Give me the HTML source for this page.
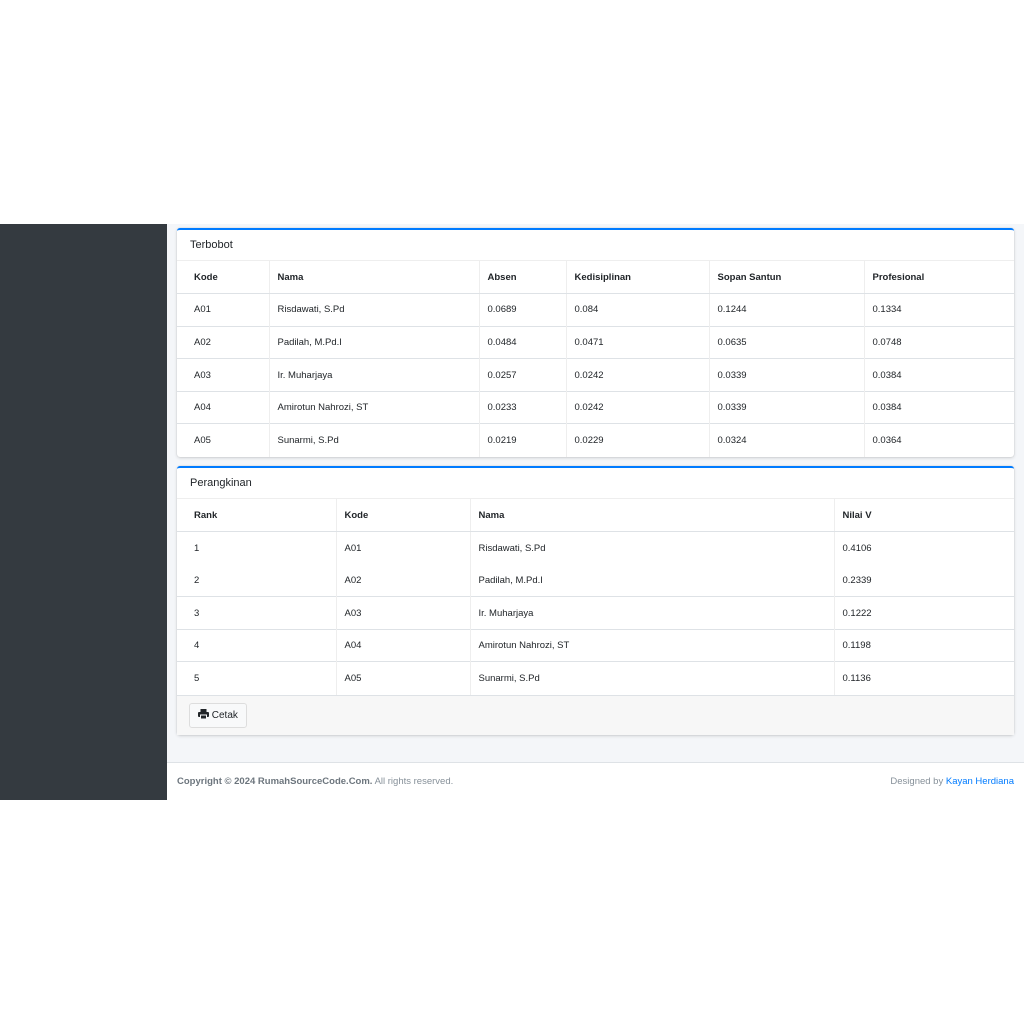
<!DOCTYPE html>
<html><head><style>
*{box-sizing:border-box;margin:0;padding:0}
body{width:1024px;height:1024px;background:#fff;font-family:"Liberation Sans",sans-serif;color:#212529;position:relative;overflow:hidden}
.side{position:absolute;left:0;top:224px;width:167px;height:576px;background:#343a40}
.main{position:absolute;left:167px;top:224px;width:857px;height:538px;background:#f4f6f9}
.foot{position:absolute;left:167px;top:762px;width:857px;height:38px;background:#fff;border-top:1px solid #dee2e6;font-size:9.5px;color:#869099;padding:0 10px;line-height:38px}
.foot b{color:#6c757d}
.foot .r{position:absolute;right:10px;top:0}
.foot a{color:#007bff}
.card{position:absolute;left:10px;width:837px;background:#fff;border-top:2px solid #007bff;border-radius:3px;box-shadow:0 0 1px rgba(0,0,0,.2),0 1px 3px rgba(0,0,0,.15)}
.hd{height:31px;line-height:30px;padding-left:13px;font-size:11px;border-bottom:1px solid #eee}
table{border-collapse:collapse;width:100%;font-size:9.5px}
td,th{height:32.6px;padding:0 8px;text-align:left;border-top:1px solid #dee2e6}
td:first-child,th:first-child{padding-left:17px}
th{font-weight:bold;border-bottom:1px solid #dee2e6;border-top:none}
.b td,.b th{border-left:1px solid #eee}
.b td:first-child,.b th:first-child{border-left:none}
.cf{background:#f7f7f7;height:40px;padding:7px 12px;border-top:1px solid #dee2e6}
.btn{display:inline-block;height:25px;padding:0 8px;border:1px solid #ddd;border-radius:3px;background:#f8f9fa;font-size:10px;line-height:23px}
</style></head><body>
<div class="side"></div>
<div class="main">
<div class="card" style="top:4px">
<div class="hd">Terbobot</div>
<table class="b">
<tr><th style="width:92px">Kode</th><th style="width:210px">Nama</th><th style="width:87px">Absen</th><th style="width:143px">Kedisiplinan</th><th style="width:155px">Sopan Santun</th><th>Profesional</th></tr>
<tr><td>A01</td><td>Risdawati, S.Pd</td><td>0.0689</td><td>0.084</td><td>0.1244</td><td>0.1334</td></tr>
<tr><td>A02</td><td>Padilah, M.Pd.I</td><td>0.0484</td><td>0.0471</td><td>0.0635</td><td>0.0748</td></tr>
<tr><td>A03</td><td>Ir. Muharjaya</td><td>0.0257</td><td>0.0242</td><td>0.0339</td><td>0.0384</td></tr>
<tr><td>A04</td><td>Amirotun Nahrozi, ST</td><td>0.0233</td><td>0.0242</td><td>0.0339</td><td>0.0384</td></tr>
<tr><td>A05</td><td>Sunarmi, S.Pd</td><td>0.0219</td><td>0.0229</td><td>0.0324</td><td>0.0364</td></tr>
</table></div>
<div class="card" style="top:242px">
<div class="hd">Perangkinan</div>
<table class="b">
<tr><th style="width:159px">Rank</th><th style="width:134px">Kode</th><th style="width:364px">Nama</th><th>Nilai V</th></tr>
<tr><td>1</td><td>A01</td><td>Risdawati, S.Pd</td><td>0.4106</td></tr>
<tr><td style="border-top:none">2</td><td style="border-top:none">A02</td><td style="border-top:none">Padilah, M.Pd.I</td><td style="border-top:none">0.2339</td></tr>
<tr><td>3</td><td>A03</td><td>Ir. Muharjaya</td><td>0.1222</td></tr>
<tr><td>4</td><td>A04</td><td>Amirotun Nahrozi, ST</td><td>0.1198</td></tr>
<tr><td>5</td><td>A05</td><td>Sunarmi, S.Pd</td><td>0.1136</td></tr>
</table>
<div class="cf"><span class="btn"><svg width="11" height="10" viewBox="0 0 11 10" style="vertical-align:-1px"><rect x="2.5" y="0" width="6" height="3" fill="#212529"/><rect x="0" y="3" width="11" height="5" rx="1" fill="#212529"/><rect x="2.5" y="6" width="6" height="4" fill="#212529" stroke="#f8f9fa" stroke-width="1"/></svg> Cetak</span></div>
</div>
</div>
<div class="foot"><b>Copyright © 2024 RumahSourceCode.Com.</b> All rights reserved.<span class="r">Designed by <a>Kayan Herdiana</a></span></div>
</body></html>
